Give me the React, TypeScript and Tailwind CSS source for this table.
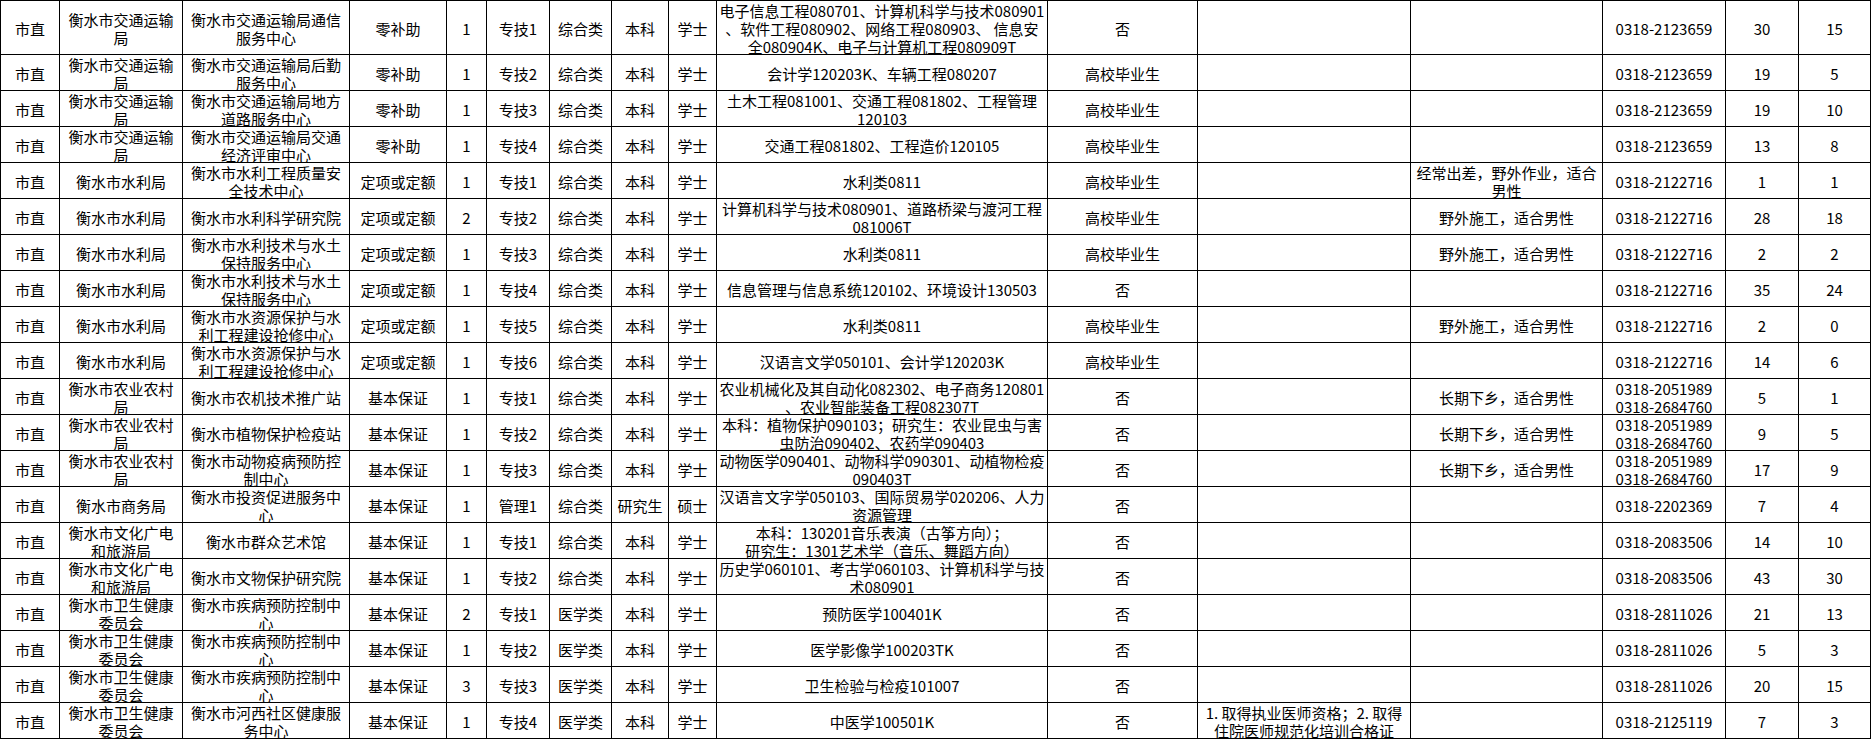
const rows: string[][] = [
  ["市直", "衡水市交通运输\n局", "衡水市交通运输局通信\n服务中心", "零补助", "1", "专技1", "综合类", "本科", "学士", "电子信息工程080701、计算机科学与技术080901\n、软件工程080902、网络工程080903、 信息安\n全080904K、电子与计算机工程080909T", "否", "", "", "0318-2123659", "30", "15"],
  ["市直", "衡水市交通运输\n局", "衡水市交通运输局后勤\n服务中心", "零补助", "1", "专技2", "综合类", "本科", "学士", "会计学120203K、车辆工程080207", "高校毕业生", "", "", "0318-2123659", "19", "5"],
  ["市直", "衡水市交通运输\n局", "衡水市交通运输局地方\n道路服务中心", "零补助", "1", "专技3", "综合类", "本科", "学士", "土木工程081001、交通工程081802、工程管理\n120103", "高校毕业生", "", "", "0318-2123659", "19", "10"],
  ["市直", "衡水市交通运输\n局", "衡水市交通运输局交通\n经济评审中心", "零补助", "1", "专技4", "综合类", "本科", "学士", "交通工程081802、工程造价120105", "高校毕业生", "", "", "0318-2123659", "13", "8"],
  ["市直", "衡水市水利局", "衡水市水利工程质量安\n全技术中心", "定项或定额", "1", "专技1", "综合类", "本科", "学士", "水利类0811", "高校毕业生", "", "经常出差，野外作业，适合\n男性", "0318-2122716", "1", "1"],
  ["市直", "衡水市水利局", "衡水市水利科学研究院", "定项或定额", "2", "专技2", "综合类", "本科", "学士", "计算机科学与技术080901、道路桥梁与渡河工程\n081006T", "高校毕业生", "", "野外施工，适合男性", "0318-2122716", "28", "18"],
  ["市直", "衡水市水利局", "衡水市水利技术与水土\n保持服务中心", "定项或定额", "1", "专技3", "综合类", "本科", "学士", "水利类0811", "高校毕业生", "", "野外施工，适合男性", "0318-2122716", "2", "2"],
  ["市直", "衡水市水利局", "衡水市水利技术与水土\n保持服务中心", "定项或定额", "1", "专技4", "综合类", "本科", "学士", "信息管理与信息系统120102、环境设计130503", "否", "", "", "0318-2122716", "35", "24"],
  ["市直", "衡水市水利局", "衡水市水资源保护与水\n利工程建设抢修中心", "定项或定额", "1", "专技5", "综合类", "本科", "学士", "水利类0811", "高校毕业生", "", "野外施工，适合男性", "0318-2122716", "2", "0"],
  ["市直", "衡水市水利局", "衡水市水资源保护与水\n利工程建设抢修中心", "定项或定额", "1", "专技6", "综合类", "本科", "学士", "汉语言文学050101、会计学120203K", "高校毕业生", "", "", "0318-2122716", "14", "6"],
  ["市直", "衡水市农业农村\n局", "衡水市农机技术推广站", "基本保证", "1", "专技1", "综合类", "本科", "学士", "农业机械化及其自动化082302、电子商务120801\n、农业智能装备工程082307T", "否", "", "长期下乡，适合男性", "0318-2051989\n0318-2684760", "5", "1"],
  ["市直", "衡水市农业农村\n局", "衡水市植物保护检疫站", "基本保证", "1", "专技2", "综合类", "本科", "学士", "本科：植物保护090103；研究生：农业昆虫与害\n虫防治090402、农药学090403", "否", "", "长期下乡，适合男性", "0318-2051989\n0318-2684760", "9", "5"],
  ["市直", "衡水市农业农村\n局", "衡水市动物疫病预防控\n制中心", "基本保证", "1", "专技3", "综合类", "本科", "学士", "动物医学090401、动物科学090301、动植物检疫\n090403T", "否", "", "长期下乡，适合男性", "0318-2051989\n0318-2684760", "17", "9"],
  ["市直", "衡水市商务局", "衡水市投资促进服务中\n心", "基本保证", "1", "管理1", "综合类", "研究生", "硕士", "汉语言文字学050103、国际贸易学020206、人力\n资源管理", "否", "", "", "0318-2202369", "7", "4"],
  ["市直", "衡水市文化广电\n和旅游局", "衡水市群众艺术馆", "基本保证", "1", "专技1", "综合类", "本科", "学士", "本科：130201音乐表演（古筝方向）；\n研究生：1301艺术学（音乐、舞蹈方向）", "否", "", "", "0318-2083506", "14", "10"],
  ["市直", "衡水市文化广电\n和旅游局", "衡水市文物保护研究院", "基本保证", "1", "专技2", "综合类", "本科", "学士", "历史学060101、考古学060103、计算机科学与技\n术080901", "否", "", "", "0318-2083506", "43", "30"],
  ["市直", "衡水市卫生健康\n委员会", "衡水市疾病预防控制中\n心", "基本保证", "2", "专技1", "医学类", "本科", "学士", "预防医学100401K", "否", "", "", "0318-2811026", "21", "13"],
  ["市直", "衡水市卫生健康\n委员会", "衡水市疾病预防控制中\n心", "基本保证", "1", "专技2", "医学类", "本科", "学士", "医学影像学100203TK", "否", "", "", "0318-2811026", "5", "3"],
  ["市直", "衡水市卫生健康\n委员会", "衡水市疾病预防控制中\n心", "基本保证", "3", "专技3", "医学类", "本科", "学士", "卫生检验与检疫101007", "否", "", "", "0318-2811026", "20", "15"],
  ["市直", "衡水市卫生健康\n委员会", "衡水市河西社区健康服\n务中心", "基本保证", "1", "专技4", "医学类", "本科", "学士", "中医学100501K", "否", "1. 取得执业医师资格；2. 取得\n住院医师规范化培训合格证", "", "0318-2125119", "7", "3"],
];

const PositionTable = () => {
  return (
    <div className="min-h-screen bg-white">
      {/* spreadsheet grid, 16 columns */}
      <div className="grid w-[1871px] grid-cols-[59px_123px_167px_97px_40px_63px_62px_57px_48px_331px_150px_213px_192px_123px_73px_72px] border-l border-t border-black font-['Noto_Sans_CJK_SC',sans-serif] text-[15px] leading-[18px] text-black">
        {rows.map((row, i) =>
          row.map((cell, j) => (
            <div
              key={`${i}-${j}`}
              className={`flex items-center justify-center whitespace-pre border-b border-r border-black pt-[2px] text-center ${
                i === 0 ? "h-[54px]" : "h-[36px]"
              }`}
            >
              {cell}
            </div>
          ))
        )}
      </div>
    </div>
  );
};

export default PositionTable;
